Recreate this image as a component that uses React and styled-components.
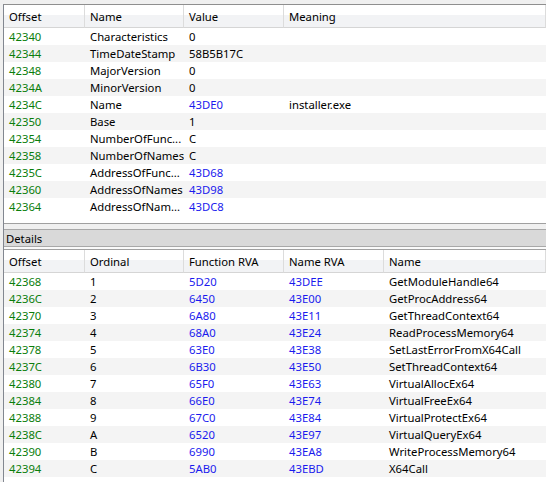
import styled, { createGlobalStyle } from "styled-components";

const GlobalStyle = createGlobalStyle`
  html, body {
    margin: 0;
    background: #f0f0f0;
  }
  * {
    box-sizing: border-box;
  }
`;

const Page = styled.div`
  height: 482px;
  overflow: hidden;
  padding: 4px 0 0 3px;
  font-family: "Noto Sans", "Open Sans", sans-serif;
  font-size: 11.3px;
  color: #000;
`;

const Frame = styled.div`
  display: flex;
  flex-direction: column;
  height: 478px;
  border-top: 1px solid #8f8f8f;
  border-left: 1px solid #828790;
`;

const TopPanel = styled.div`
  height: 219px;
  background: #fff;
  border-bottom: 1px solid #a0a0a0;
`;

const Splitter = styled.div`
  height: 5px;
  background: #f0f0f0;
`;

const DetailsBar = styled.div`
  display: flex;
  align-items: center;
  height: 18px;
  padding-left: 2px;
  background: #d9d9d9;
  border-top: 1px solid #a8a8a8;
  border-bottom: 1px solid #a8a8a8;
`;

const Gap = styled.div`
  height: 3px;
  background: #fafafa;
  border-bottom: 1px solid #a0a0a0;
`;

const BottomPanel = styled.div`
  flex: 1;
  background: #fff;
`;

const Grid = styled.div`
  display: grid;
  grid-template-columns: ${(p) => p.$cols};
`;

const HeadCell = styled.div`
  height: 23px;
  display: flex;
  align-items: center;
  padding-left: 5px;
  background: linear-gradient(#ffffff 0 45%, #f2f3f5 45% 100%);
  border-bottom: 1px solid #d5d5d5;
  border-right: 1px solid #dcdcdc;
  white-space: nowrap;
`;

const Cell = styled.div`
  height: 17px;
  display: flex;
  align-items: center;
  padding-left: 5px;
  white-space: nowrap;
  overflow: hidden;
  background: ${(p) => (p.$odd ? "#f4f4f4" : "#ffffff")};
  color: ${(p) =>
    p.$tone === "green" ? "#0a7d0a" : p.$tone === "blue" ? "#1a1aee" : "#000"};
`;

const topCols = ["Offset", "Name", "Value", "Meaning"];
const topRows = [
  ["42340", "Characteristics", "0", ""],
  ["42344", "TimeDateStamp", "58B5B17C", ""],
  ["42348", "MajorVersion", "0", ""],
  ["4234A", "MinorVersion", "0", ""],
  ["4234C", "Name", "43DE0", "installer.exe", true],
  ["42350", "Base", "1", ""],
  ["42354", "NumberOfFunc...", "C", ""],
  ["42358", "NumberOfNames", "C", ""],
  ["4235C", "AddressOfFunc...", "43D68", "", true],
  ["42360", "AddressOfNames", "43D98", "", true],
  ["42364", "AddressOfNam...", "43DC8", "", true],
];

const bottomCols = ["Offset", "Ordinal", "Function RVA", "Name RVA", "Name"];
const bottomRows = [
  ["42368", "1", "5D20", "43DEE", "GetModuleHandle64"],
  ["4236C", "2", "6450", "43E00", "GetProcAddress64"],
  ["42370", "3", "6A80", "43E11", "GetThreadContext64"],
  ["42374", "4", "68A0", "43E24", "ReadProcessMemory64"],
  ["42378", "5", "63E0", "43E38", "SetLastErrorFromX64Call"],
  ["4237C", "6", "6B30", "43E50", "SetThreadContext64"],
  ["42380", "7", "65F0", "43E63", "VirtualAllocEx64"],
  ["42384", "8", "66E0", "43E74", "VirtualFreeEx64"],
  ["42388", "9", "67C0", "43E84", "VirtualProtectEx64"],
  ["4238C", "A", "6520", "43E97", "VirtualQueryEx64"],
  ["42390", "B", "6990", "43EA8", "WriteProcessMemory64"],
  ["42394", "C", "5AB0", "43EBD", "X64Call"],
];

function topTone(row, i) {
  if (i === 0) return "green";
  if (i === 2 && row[4]) return "blue";
  return undefined;
}

function bottomTone(i) {
  if (i === 0) return "green";
  if (i === 2 || i === 3) return "blue";
  return undefined;
}

function App() {
  return (
    <Page>
      <GlobalStyle />
      <Frame>
        <TopPanel>
          <Grid $cols="81px 99px 100px 1fr">
            {topCols.map((c) => (
              <HeadCell key={c}>{c}</HeadCell>
            ))}
            {topRows.map((row, r) =>
              row.slice(0, 4).map((v, i) => (
                <Cell key={`${r}-${i}`} $odd={r % 2 === 1} $tone={topTone(row, i)}>
                  {v}
                </Cell>
              ))
            )}
          </Grid>
        </TopPanel>
        <Splitter />
        <DetailsBar>Details</DetailsBar>
        <Gap />
        <BottomPanel>
          <Grid $cols="81px 99px 100px 100px 1fr">
            {bottomCols.map((c) => (
              <HeadCell key={c}>{c}</HeadCell>
            ))}
            {bottomRows.map((row, r) =>
              row.map((v, i) => (
                <Cell key={`${r}-${i}`} $odd={r % 2 === 1} $tone={bottomTone(i)}>
                  {v}
                </Cell>
              ))
            )}
          </Grid>
        </BottomPanel>
      </Frame>
    </Page>
  );
}

export default App;
